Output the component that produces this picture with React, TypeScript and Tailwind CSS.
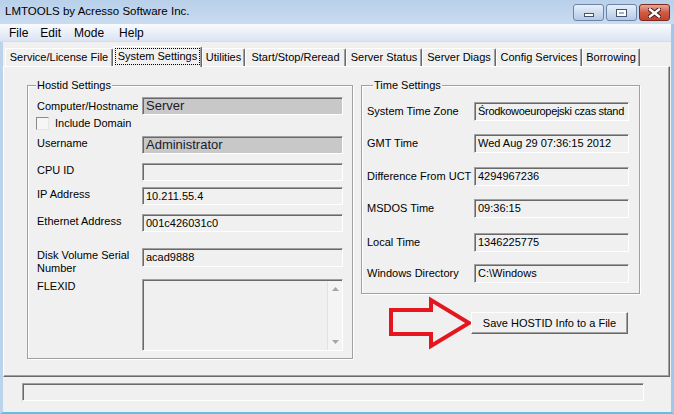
import React from 'react';

const sunken =
  'border-t border-l border-t-[#a0a0a0] border-l-[#a0a0a0] border-b border-r border-b-white border-r-white shadow-[inset_1px_1px_0_#696969]';

function Field({ children, gray }: { children?: React.ReactNode; gray?: boolean }) {
  return (
    <div
      className={`${sunken} h-[18px] w-[201px] flex items-center overflow-hidden whitespace-nowrap pl-[3px] ${
        gray ? 'bg-[#c8c8c8] text-[13px] text-[#1a1a2a]' : 'bg-[#f0f0f0] text-[11px]'
      }`}
    >
      {children}
    </div>
  );
}

function TimeRow({ label, value, mt, tight }: { label: string; value: string; mt: string; tight?: boolean }) {
  return (
    <div className={`flex items-center ${mt}`}>
      <div className="w-[107px] text-[11px] leading-[13px] whitespace-nowrap">{label}</div>
      <div
        className={`${sunken} h-[19px] w-[155px] flex items-center overflow-hidden whitespace-nowrap pl-[3px] text-[11px] ${
          tight ? 'tracking-[-0.3px]' : ''
        }`}
      >
        {value}
      </div>
    </div>
  );
}

function HostRow({ label, children, mt }: { label: React.ReactNode; children: React.ReactNode; mt: string }) {
  return (
    <div className={`flex items-start ${mt}`}>
      <div className="w-[105px] pt-[1px] text-[11px] leading-[13px]">{label}</div>
      {children}
    </div>
  );
}

const tabs = [
  { name: 'Service/License File', w: 'w-[108px]' },
  { name: 'System Settings', w: 'w-[89px]', active: true },
  { name: 'Utilities', w: 'w-[43px]' },
  { name: 'Start/Stop/Reread', w: 'w-[101px]' },
  { name: 'Server Status', w: 'w-[76px]' },
  { name: 'Server Diags', w: 'w-[74px]' },
  { name: 'Config Services', w: 'w-[86px]' },
  { name: 'Borrowing', w: 'w-[58px]' },
];

export default function App() {
  return (
    <div className="w-[674px] h-[414px] flex flex-col bg-[#f0f0f0] overflow-hidden font-['Liberation_Sans',Arial,sans-serif] text-black">
      {/* Title bar */}
      <div className="h-[24px] flex items-center bg-linear-to-b from-[#b9d0ea] to-[#c9dbf0] pl-[5px] pr-[4px]">
        <div className="flex-1 text-[11.5px] leading-none">LMTOOLS by Acresso Software Inc.</div>
        <div className="flex gap-[2px] self-start mt-[4px]">
          <div className="w-[31px] h-[17px] rounded-[3px] border border-[#6c84a8] bg-linear-to-b from-[#e8eff9] to-[#b5c9e5] flex items-end justify-center pb-[3px]">
            <div className="w-[10px] h-[4px] bg-white border border-[#3f5573]" />
          </div>
          <div className="w-[31px] h-[17px] rounded-[3px] border border-[#6c84a8] bg-linear-to-b from-[#e8eff9] to-[#b5c9e5] flex items-center justify-center">
            <div className="w-[11px] h-[8px] border border-[#3f5573] bg-white flex items-center justify-center">
              <div className="w-[5px] h-[2px] bg-[#9bb3d3]" />
            </div>
          </div>
          <div className="w-[31px] h-[17px] rounded-[3px] border border-[#7a2a22] bg-linear-to-b from-[#e6a897] via-[#d05a43] to-[#c2432f] flex items-center justify-center">
            <svg width="13" height="10" viewBox="0 0 13 10">
              <path d="M2 1.5 L11 8.5 M11 1.5 L2 8.5" stroke="#4a1a14" strokeWidth="4.4" strokeLinecap="square" />
              <path d="M2 1.5 L11 8.5 M11 1.5 L2 8.5" stroke="#ffffff" strokeWidth="2.4" strokeLinecap="square" />
            </svg>
          </div>
        </div>
      </div>

      <div className="flex-1 flex flex-col border-l-[3px] border-r-[3px] border-b-[2px] border-l-[#bcd3ec] border-r-[#9ccbea] border-b-[#62bfe4]">
        {/* Menu bar */}
        <div className="h-[18px] flex items-center text-[12px] leading-none bg-linear-to-b from-[#f9fbfe] to-[#dbe4f3] border-b border-[#d2dcec] -ml-[3px] pl-[9px]">
          <span>File</span>
          <span className="ml-[12px]">Edit</span>
          <span className="ml-[13px]">Mode</span>
          <span className="ml-[15px]">Help</span>
        </div>

        {/* Tabs */}
        <div className="mt-[4px] h-[20px] flex items-end pl-[2px]">
          {tabs.map((t) =>
            t.active ? (
              <div
                key={t.name}
                className={`${t.w} h-[21px] -mb-[1px] relative z-10 bg-[#f0f0f0] border-t border-l border-white border-r border-r-[#696969] shadow-[inset_-1px_0_0_#a0a0a0] rounded-t-[2px] flex items-start justify-center pt-[1px] text-[11px] leading-[13px]`}
              >
                <span className="border border-dotted border-black px-[2px] py-[1px]">{t.name}</span>
              </div>
            ) : (
              <div
                key={t.name}
                className={`${t.w} h-[18px] bg-[#f0f0f0] border-t border-l border-white border-r border-r-[#696969] shadow-[inset_-1px_0_0_#a0a0a0] rounded-t-[2px] flex items-center justify-center text-[11px] leading-none whitespace-nowrap`}
              >
                {t.name}
              </div>
            )
          )}
        </div>

        {/* Panel */}
        <div className="w-[667px] h-[311px] border-t border-l border-white border-r border-b border-r-[#696969] border-b-[#696969] shadow-[inset_-1px_-1px_0_#a0a0a0] flex items-start gap-[8px] pl-[23px] pt-[18px]">
          {/* Hostid Settings */}
          <div className="w-[326px] border border-[#a0a0a0] shadow-[inset_1px_1px_0_#fff,1px_1px_0_#fff] pl-[9px] pb-[7px]">
            <div className="-mt-[7px] -ml-[1px] w-fit px-[1px] bg-[#f0f0f0] text-[11px] leading-[13px]">Hostid Settings</div>
            <div className="flex items-center mt-[5px]">
              <div className="w-[105px] text-[11px] leading-[13px]">Computer/Hostname</div>
              <Field gray>Server</Field>
            </div>
            <div className="flex items-center mt-[2px] h-[13px] -ml-[1px]">
              <div className="w-[13px] h-[13px] bg-[#f6f6f6] border-t border-l border-[#8a8a8a] border-b border-r border-b-[#e6e6e6] border-r-[#e6e6e6]" />
              <span className="ml-[6px] text-[11px] leading-none">Include Domain</span>
            </div>
            <HostRow label="Username" mt="mt-[6px]">
              <Field gray>Administrator</Field>
            </HostRow>
            <HostRow label="CPU ID" mt="mt-[9px]">
              <Field />
            </HostRow>
            <HostRow label="IP Address" mt="mt-[6px]">
              <Field>10.211.55.4</Field>
            </HostRow>
            <HostRow label="Ethernet Address" mt="mt-[9px]">
              <Field>001c426031c0</Field>
            </HostRow>
            <HostRow
              label={
                <>
                  Disk Volume Serial
                  <br />
                  Number
                </>
              }
              mt="mt-[16px]"
            >
              <div className={`${sunken} h-[19px] w-[201px] flex items-center pl-[3px] text-[11px]`}>acad9888</div>
            </HostRow>
            <HostRow label="FLEXID" mt="mt-[4px]">
              <div className={`${sunken} h-[72px] w-[201px] flex`}>
                <div className="flex-1" />
                <div className="w-[15px] mt-[1px] bg-[#f4f4f4] border-l border-[#e2e2e2] flex flex-col justify-between items-center py-[6px]">
                  <svg width="7" height="4" viewBox="0 0 7 4">
                    <path d="M0 4 L3.5 0 L7 4 Z" fill="#a6a6a6" />
                  </svg>
                  <svg width="7" height="4" viewBox="0 0 7 4">
                    <path d="M0 0 L3.5 4 L7 0 Z" fill="#a6a6a6" />
                  </svg>
                </div>
              </div>
            </HostRow>
          </div>

          {/* Right column */}
          <div className="w-[279px] flex flex-col">
            <div className="border border-[#a0a0a0] shadow-[inset_1px_1px_0_#fff,1px_1px_0_#fff] pl-[5px] pb-[10px]">
              <div className="-mt-[7px] ml-[6px] w-fit px-[1px] bg-[#f0f0f0] text-[11px] leading-[13px]">Time Settings</div>
              <TimeRow label="System Time Zone" value="Środkowoeuropejski czas stand" mt="mt-[10px]" tight />
              <TimeRow label="GMT Time" value="Wed Aug 29 07:36:15 2012" mt="mt-[13px]" />
              <TimeRow label="Difference From UCT" value="4294967236" mt="mt-[14px]" />
              <TimeRow label="MSDOS Time" value="09:36:15" mt="mt-[13px]" />
              <TimeRow label="Local Time" value="1346225775" mt="mt-[15px]" />
              <TimeRow label="Windows Directory" value="C:\Windows" mt="mt-[12px]" />
            </div>
            <div className="mt-[1px] flex items-center justify-end pr-[12px]">
              <svg width="84" height="56" viewBox="0 0 84 56" className="overflow-visible">
                <path
                  d="M4 15 L44 15 L44 5 L82 28 L44 51 L44 39 L4 39 Z"
                  fill="none"
                  stroke="#e5161e"
                  strokeWidth="4"
                  strokeLinejoin="miter"
                />
              </svg>
              <div className="relative w-[157px] h-[22px] bg-[#f0f0f0] border-t border-l border-white border-r border-b border-r-[#696969] border-b-[#696969] shadow-[inset_-1px_-1px_0_#a0a0a0] flex items-center justify-center text-[11px] leading-none">
                Save HOSTID Info to a File
              </div>
            </div>
          </div>
        </div>

        {/* Status bar */}
        <div className={`${sunken} mt-[6px] ml-[19px] w-[622px] h-[18px]`} />
      </div>
    </div>
  );
}
